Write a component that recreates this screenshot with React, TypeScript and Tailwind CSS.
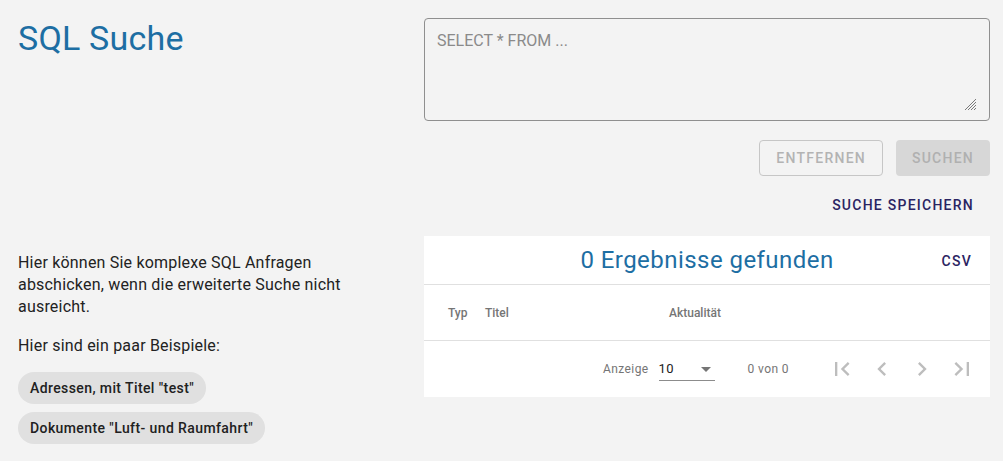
import React from 'react';

const font = { fontFamily: 'Roboto, "Noto Sans", sans-serif' };

const PageIcon: React.FC<{ d: string }> = ({ d }) => (
  <button disabled className="w-10 h-10 flex items-center justify-center text-[#bdbdbd]">
    <svg width="28" height="28" viewBox="0 0 24 24" fill="currentColor">
      <path d={d} />
    </svg>
  </button>
);

const Chip: React.FC<{ label: string }> = ({ label }) => (
  <button className="h-8 px-3 rounded-full bg-[#e0e0e0] text-[14px] font-medium tracking-[0.4px] text-[#212121] w-fit">
    {label}
  </button>
);

export default function App() {
  return (
    <div style={font} className="min-h-[461px] bg-[#f3f3f3] pt-[18px] pl-[18px] pr-[13px]">
      <div className="grid grid-cols-[376px_1fr] gap-x-[30px]">
        {/* left: title */}
        <div>
          <h1 className="text-[34px] leading-[40px] text-[#1d6ea3] font-normal tracking-[0.2px]">SQL Suche</h1>
        </div>

        {/* right: query input */}
        <div className="flex flex-col">
          <div className="relative">
            <textarea
              placeholder="SELECT * FROM ..."
              className="block h-[103px] w-full resize-none rounded border border-[#8f8f8f] bg-transparent px-3 py-[12px] text-[16px] leading-[20px] text-[#212121] placeholder:text-[#8a8a8a] outline-none"
            />
            <svg className="absolute right-[14px] bottom-[11px]" width="12" height="12" viewBox="0 0 12 12" stroke="#7a7a7a" strokeWidth="1">
              <line x1="1" y1="12" x2="12" y2="1" />
              <line x1="4" y1="12" x2="12" y2="4" />
              <line x1="7" y1="12" x2="12" y2="7" />
              <line x1="10" y1="12" x2="12" y2="10" />
            </svg>
          </div>
          <div className="flex justify-end gap-[13px] mt-[19px]">
            <button
              disabled
              className="h-9 px-4 rounded border border-[#c6c6c6] text-[14px] font-medium tracking-[1.25px] text-[#b3b3b3]"
            >
              ENTFERNEN
            </button>
            <button
              disabled
              className="h-9 w-[94px] rounded bg-[#d7d7d7] text-[14px] font-medium tracking-[1.25px] text-[#b0b0b0]"
            >
              SUCHEN
            </button>
          </div>
          <div className="flex justify-end mt-[11px]">
            <button className="h-9 px-4 text-[14px] font-medium tracking-[1.25px] text-[#2a2462]">
              SUCHE SPEICHERN
            </button>
          </div>
        </div>

        {/* left: description */}
        <div className="pt-[29px] pr-[20px] text-[16px] leading-[22px] tracking-[0.2px] text-[#222]">
          <p>Hier können Sie komplexe SQL Anfragen abschicken, wenn die erweiterte Suche nicht ausreicht.</p>
          <p className="mt-[17px]">Hier sind ein paar Beispiele:</p>
          <div className="flex flex-col gap-[8px] mt-[15px]">
            <Chip label={'Adressen, mit Titel "test"'} />
            <Chip label={'Dokumente "Luft- und Raumfahrt"'} />
          </div>
        </div>

        {/* right: results */}
        <div className="mt-[13px]">
          <div className="bg-white">
            <div className="relative h-[49px] flex items-center justify-center border-b border-[#e0e0e0]">
              <span className="text-[24px] leading-[32px] text-[#1d6ea3] tracking-[0.45px]">0 Ergebnisse gefunden</span>
              <button className="absolute right-[2px] top-[7px] h-9 px-4 text-[14px] font-medium tracking-[1.25px] text-[#2a2462]">
                CSV
              </button>
            </div>
            <div className="h-[56px] flex items-center border-b border-[#e0e0e0] text-[12px] font-medium text-[#757575]">
              <span className="ml-[24px] w-[37px]">Typ</span>
              <span className="w-[184px]">Titel</span>
              <span>Aktualität</span>
            </div>
            <div className="h-[56px] flex items-center justify-end pr-2 text-[12px] tracking-[0.4px] text-[#757575]">
              <span className="mr-[10px]">Anzeige</span>
              <div className="relative w-[56px] h-[24px] mr-[33px] border-b border-[#8c8c8c] flex items-center">
                <span className="text-[13px] text-[#212121]">10</span>
                <span className="absolute right-[4px] top-[10px] w-0 h-0 border-l-[5px] border-r-[5px] border-t-[5px] border-l-transparent border-r-transparent border-t-[#757575]" />
              </div>
              <span className="mr-[33px]">0 von 0</span>
              <PageIcon d="M18.41 16.59L13.82 12l4.59-4.59L17 6l-6 6 6 6zM6 6h2v12H6z" />
              <PageIcon d="M15.41 7.41L14 6l-6 6 6 6 1.41-1.41L10.83 12z" />
              <PageIcon d="M10 6L8.59 7.41 13.17 12l-4.58 4.59L10 18l6-6z" />
              <PageIcon d="M5.59 7.41L10.18 12l-4.59 4.59L7 18l6-6-6-6zM16 6h2v12h-2z" />
            </div>
          </div>
        </div>
      </div>
    </div>
  );
}
